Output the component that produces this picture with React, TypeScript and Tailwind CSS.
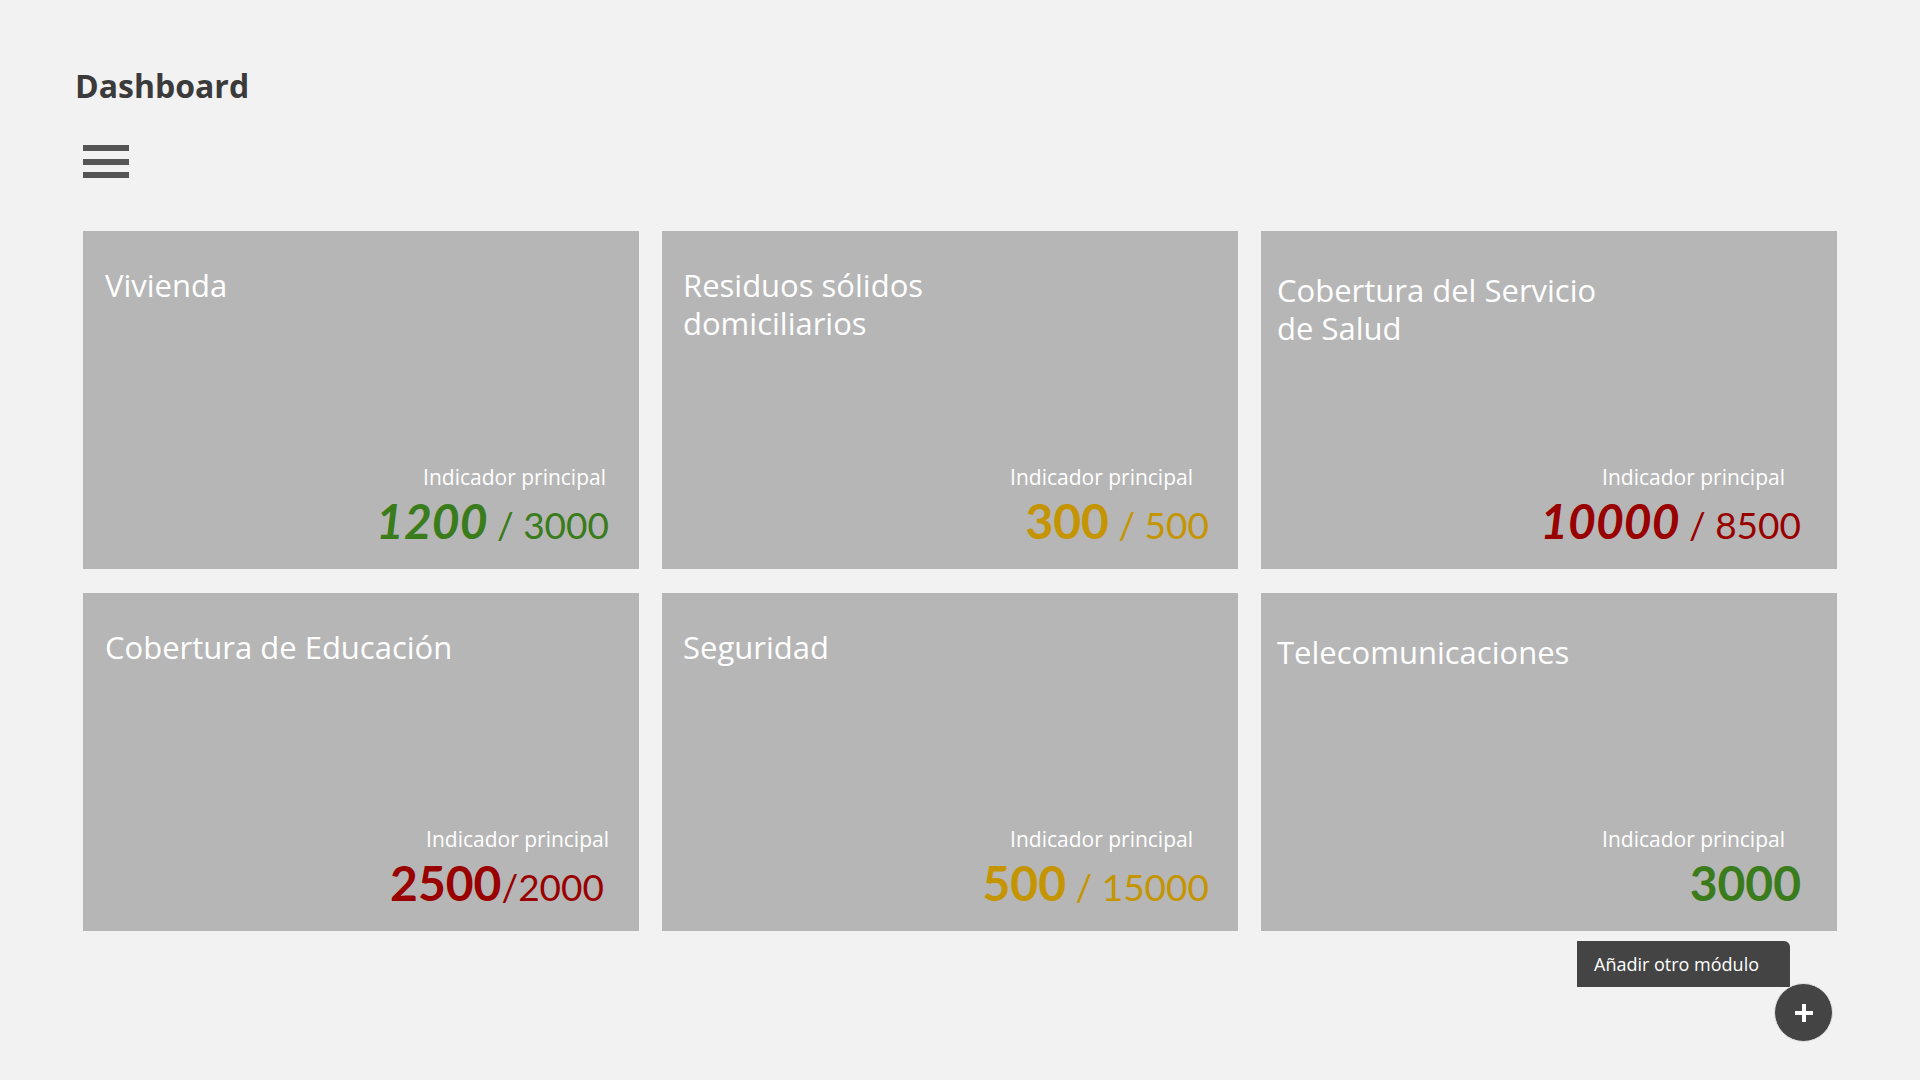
import React from "react";

type Card = {
  title: React.ReactNode;
  titleCls: string;
  labelCls: string;
  numCls: string;
  color: string;
  big: string;
  bigItalic: boolean;
  rest?: string;
};

const cards: Card[] = [
  {
    title: "Vivienda",
    titleCls: "pt-[35px] pl-[22px]",
    labelCls: "pr-[33px]",
    numCls: "pr-[30px]",
    color: "text-[#3a7b1b]",
    big: "1200",
    bigItalic: true,
    rest: " / 3000",
  },
  {
    title: (
      <>
        Residuos sólidos
        <br />
        domiciliarios
      </>
    ),
    titleCls: "pt-[35px] pl-[21px]",
    labelCls: "pr-[45px]",
    numCls: "pr-[29px]",
    color: "text-[#c49500]",
    big: "300",
    bigItalic: false,
    rest: " / 500",
  },
  {
    title: (
      <>
        Cobertura del Servicio
        <br />
        de Salud
      </>
    ),
    titleCls: "pt-[40px] pl-[16px]",
    labelCls: "pr-[52px]",
    numCls: "pr-[36px]",
    color: "text-[#990000]",
    big: "10000",
    bigItalic: true,
    rest: " / 8500",
  },
  {
    title: "Cobertura de Educación",
    titleCls: "pt-[35px] pl-[22px]",
    labelCls: "pr-[30px]",
    numCls: "pr-[35px]",
    color: "text-[#990000]",
    big: "2500",
    bigItalic: false,
    rest: "/2000",
  },
  {
    title: "Seguridad",
    titleCls: "pt-[35px] pl-[21px]",
    labelCls: "pr-[45px]",
    numCls: "pr-[29px]",
    color: "text-[#c49500]",
    big: "500",
    bigItalic: false,
    rest: " / 15000",
  },
  {
    title: "Telecomunicaciones",
    titleCls: "pt-[40px] pl-[16px]",
    labelCls: "pr-[52px]",
    numCls: "pr-[36px]",
    color: "text-[#3a7b1b]",
    big: "3000",
    bigItalic: false,
  },
];

function ModuleCard({ c }: { c: Card }) {
  return (
    <div className="flex flex-col justify-between bg-[#b6b6b6] text-white">
      <div className={`text-[31px] leading-[38px] font-normal ${c.titleCls}`}>{c.title}</div>
      <div className="flex flex-col items-end pb-[24px]">
        <div className={`mb-[10px] text-[21px] leading-[20px] font-normal ${c.labelCls}`}>Indicador principal</div>
        <div className={`font-['Lato',sans-serif] text-[48px] leading-[48px] whitespace-pre ${c.numCls} ${c.color}`}>
          <span className={`font-bold ${c.bigItalic ? "italic" : ""}`}>{c.big}</span>
          {c.rest && <span className="text-[37px] leading-[37px]">{c.rest}</span>}
        </div>
      </div>
    </div>
  );
}

export default function App() {
  return (
    <div className="relative h-screen w-full overflow-hidden bg-[#f2f2f2] font-['Open_Sans',sans-serif]">
      <div className="pt-[69px] pl-[75px]">
        <h1 className="text-[32px] leading-[33px] font-bold text-[#3b3b3b]">Dashboard</h1>
      </div>
      <div className="pl-[83px]">
        <button className="mt-[43px] flex h-[33px] w-[46px] flex-col justify-between" aria-label="menu">
          <span className="block h-[6px] w-full bg-[#555555]" />
          <span className="block h-[6px] w-full bg-[#555555]" />
          <span className="block h-[6px] w-full bg-[#555555]" />
        </button>
        <div className="mt-[53px] grid grid-cols-[556px_576px_576px] grid-rows-[338px_338px] gap-x-[23px] gap-y-[24px]">
          {cards.map((c, i) => (
            <ModuleCard key={i} c={c} />
          ))}
        </div>
      </div>

      <div className="absolute left-[1577px] top-[941px] flex h-[46px] w-[213px] items-center rounded-tr-[6px] bg-[#444444] pl-[17px] text-[18px] text-white">
        Añadir otro módulo
      </div>
      <button
        className="absolute left-[1774px] top-[983px] flex h-[59px] w-[59px] items-center justify-center rounded-full border border-[#e8e8e8] bg-[#444444]"
        aria-label="Añadir"
      >
        <svg width="22" height="22" viewBox="0 0 22 22">
          <path d="M11 2v18M2 11h18" stroke="#ffffff" strokeWidth="4" />
        </svg>
      </button>
    </div>
  );
}
